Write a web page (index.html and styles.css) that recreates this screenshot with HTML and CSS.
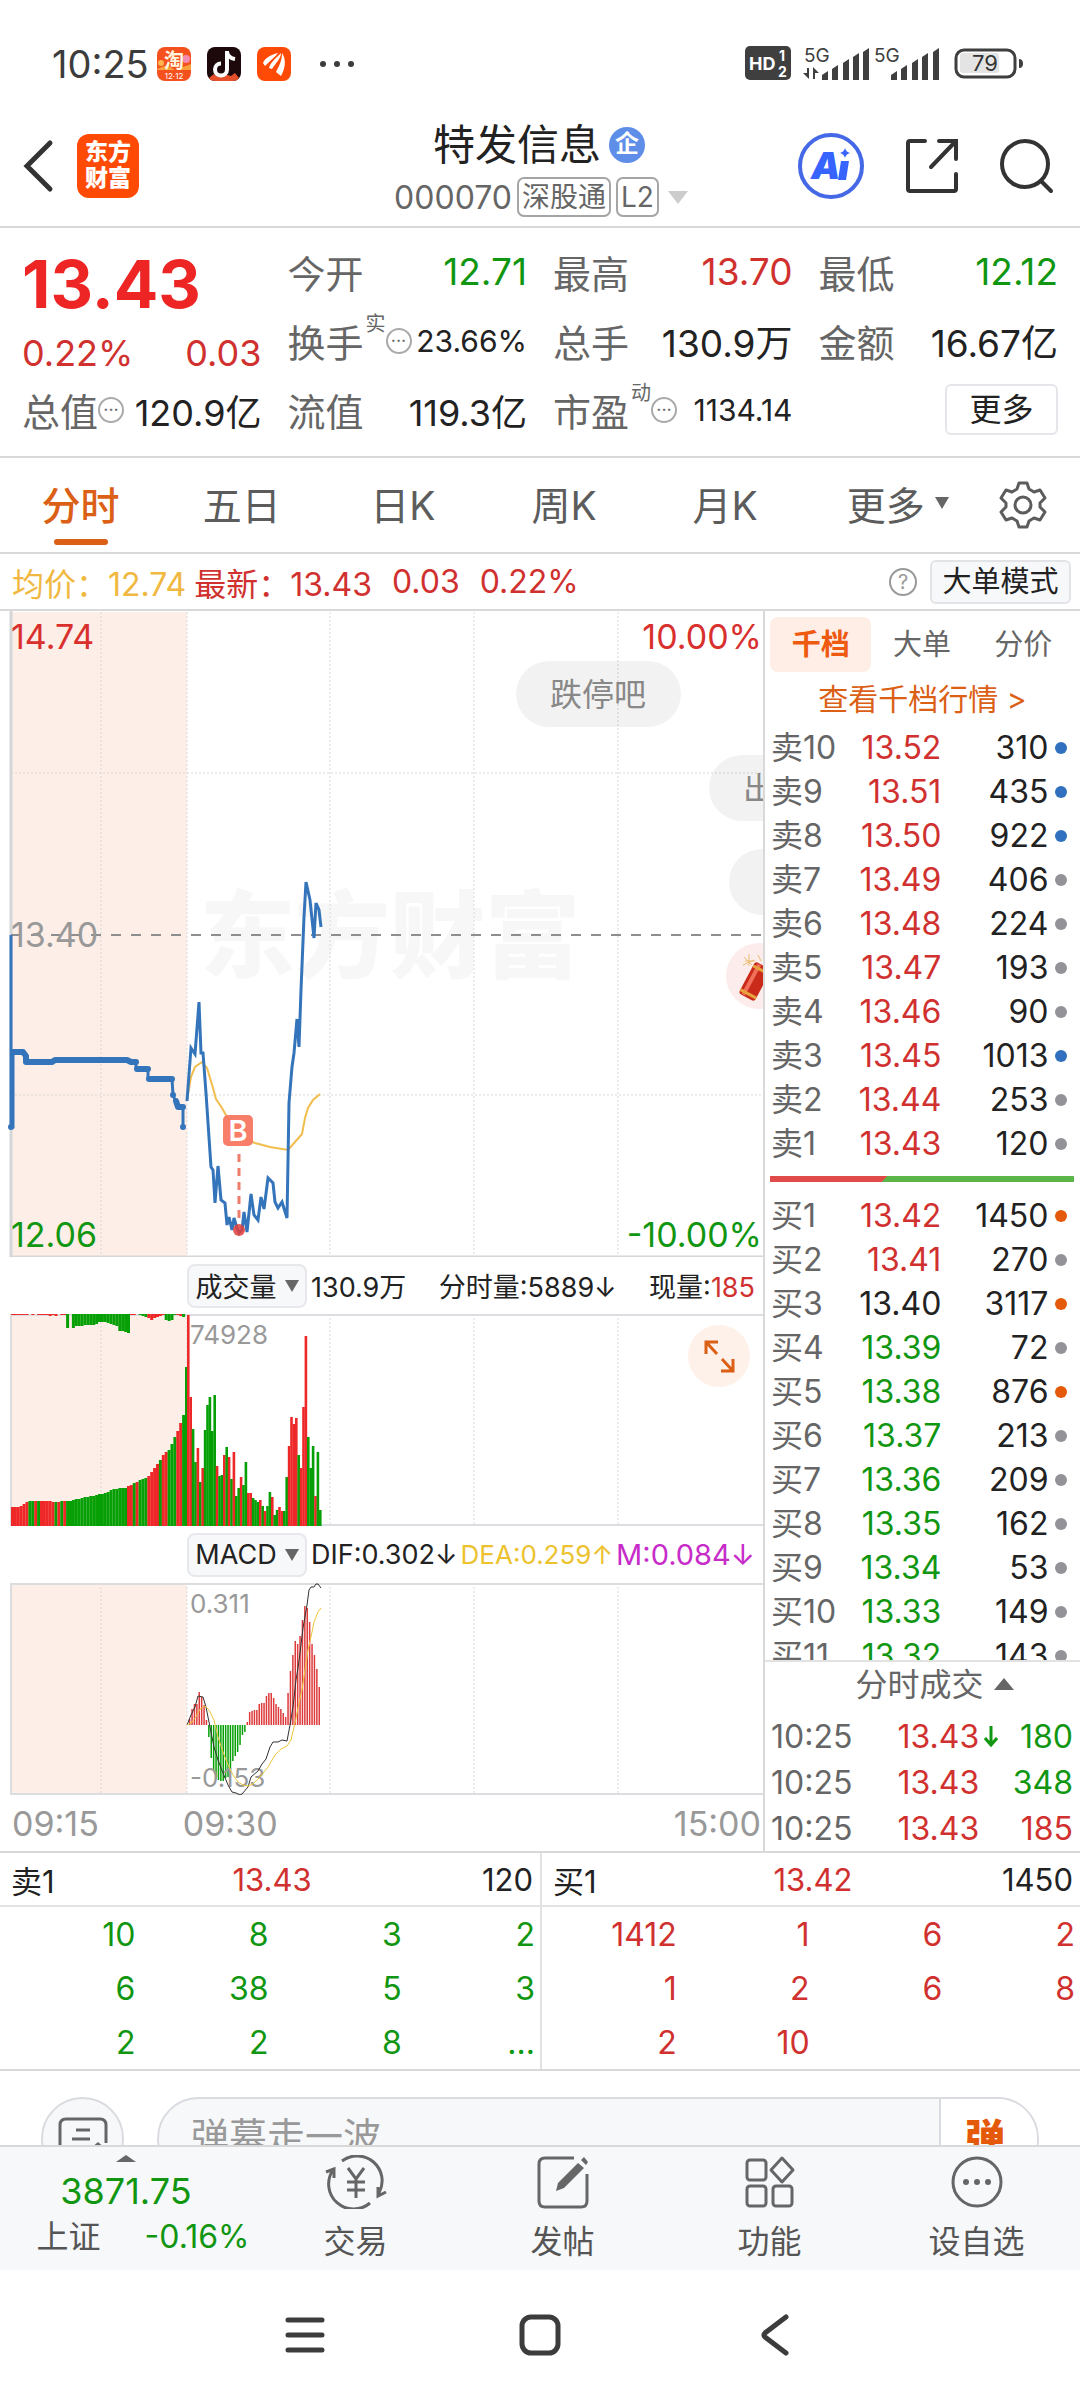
FILE: index.html
```html
<!DOCTYPE html>
<html lang="zh-CN">
<head>
<meta charset="utf-8">
<meta name="viewport" content="width=device-width, initial-scale=1">
<title>特发信息 000070</title>
<link rel="stylesheet" href="styles.css">
</head>
<body>
<div class="status">
  <span class="clock">10:25</span>
  <svg class="app" viewBox="0 0 34 34"><rect width="34" height="34" rx="8" fill="#f4511e"/><path d="M0 22l10-4 8 5 16-6v6H0z" fill="#f9a13c"/><circle cx="29" cy="12" r="4" fill="#f58ab0"/><circle cx="4" cy="16" r="3" fill="#ffb74d"/><text x="17" y="21" text-anchor="middle" font-size="20" font-weight="700" fill="#fff7df">淘</text><text x="17" y="32" text-anchor="middle" font-size="8" fill="#fff">12·12</text></svg>
  <svg class="app" viewBox="0 0 34 34"><rect width="34" height="34" rx="8" fill="#1d090c"/><path d="M2 31l5-4 4 3 6-3 7 2 4-3 4 5q-2 3-6 3H8q-4 0-6-3z" fill="#e5502a"/><path d="M20 4v18.500a6 6 0 1 1-6-6M20 5q1 6 8 7" fill="none" stroke="#fff" stroke-width="4"/></svg>
  <svg class="app" viewBox="0 0 34 34"><rect width="34" height="34" rx="8" fill="#ff4a05"/><path d="M6 16C8 11 13 8 21 6c-3 4-7 7-13 13zM12 21c1-5 6-9 12-15 0 5-5 10-9 16zM19 25c3-6 6-11 6-19 4 6 4 14-1 23z" fill="#fff"/></svg>
  <svg class="more-dots" viewBox="0 0 36 8"><g fill="#3c3c3c"><circle cx="4" cy="4" r="3"/><circle cx="18" cy="4" r="3"/><circle cx="32" cy="4" r="3"/></g></svg>
  <svg class="signals" viewBox="0 0 280 36"><g fill="#3f3f3f"><rect x="1" width="46" height="34" rx="5"/><text x="5" y="24" font-size="18" font-weight="700" fill="#fff">HD</text><text x="35" y="15" font-size="14" font-weight="700" fill="#fff">1</text><text x="34" y="31" font-size="14" font-weight="700" fill="#fff">2</text>
  <text x="60" y="16" font-size="19">5G</text><text x="130" y="16" font-size="19">5G</text>
  <path d="M65 22v11l-6-6h4v-5zM69 33V21l6 6h-4v6zM78 34v-5l6-4v9zM88 34V23l6-4v15zM99 34V17l6-4v21zM109 34V11l6-4v27zM119 34V6l6-4v32zM147 34v-5l6-4v9zM157 34V23l6-4v15zM168 34V17l6-4v21zM178 34V11l6-4v27zM189 34V6l6-4v32z"/></g>
  <rect x="216" y="7" width="39" height="20" rx="3" fill="#e4e4e4"/><rect x="212" y="4" width="59" height="27" rx="8" fill="none" stroke="#3f3f3f" stroke-width="3"/><path d="M275 13q4 0 4 4.500t-4 4.500z" fill="#3f3f3f"/><text x="241" y="25" text-anchor="middle" font-size="22" fill="#333">79</text></svg>
</div>

<header class="top">
  <button class="plain back" aria-label="返回"><svg width="32" height="54" viewBox="0 0 32 54"><path d="M27 4L4 27l23 23" fill="none" stroke="#333" stroke-width="5" stroke-linecap="round"/></svg></button>
  <div class="logo">东方<br>财富</div>
  <div class="name">
    <h1>特发信息<span class="corp">企</span></h1>
    <div class="code">000070<span class="tag">深股通</span><span class="tag">L2</span><i class="tri"></i></div>
  </div>
  <button class="plain ai" aria-label="AI"><svg width="68" height="68" viewBox="0 0 68 68"><circle cx="34" cy="34" r="31" fill="#fff" stroke="#4468e6" stroke-width="4"/><text x="14" y="47" font-size="37" font-weight="900" font-style="italic" fill="#3764ff">A</text><path d="M44 29h8l-3 19h-8z" fill="#3764ff"/><path d="M48 16q1 4 5 5-4 1-5 5-1-4-5-5 4-1 5-5z" fill="#3764ff"/></svg></button>
  <button class="plain share" aria-label="分享"><svg width="54" height="56" viewBox="0 0 54 56"><path d="M20 3H5q-2 0-2 2v46q0 2 2 2h44q2 0 2-2V36M34 3h17v18M51 3L26 29" fill="none" stroke="#333" stroke-width="4" stroke-linecap="round"/></svg></button>
  <button class="plain" aria-label="搜索"><svg width="54" height="56" viewBox="0 0 54 56"><circle cx="25" cy="26" r="23" fill="none" stroke="#333" stroke-width="4"/><path d="M41 43l10 10" stroke="#333" stroke-width="4" stroke-linecap="round"/></svg></button>
</header>

<section class="quote">
  <div class="price"><strong>13.43</strong><div class="pair"><span>0.22%</span><span>0.03</span></div></div>
  <div class="kv"><span>今开</span><b class="down">12.71</b></div>
  <div class="kv"><span>最高</span><b class="up">13.70</b></div>
  <div class="kv"><span>最低</span><b class="down">12.12</b></div>
  <div class="kv"><span>换手</span><sup>实</sup><i class="info">···</i><b class="small">23.66%</b></div>
  <div class="kv"><span>总手</span><b>130.9万</b></div>
  <div class="kv"><span>金额</span><b>16.67亿</b></div>
  <div class="kv"><span>总值</span><i class="info">···</i><b class="mid">120.9亿</b></div>
  <div class="kv"><span>流值</span><b class="mid">119.3亿</b></div>
  <div class="kv"><span>市盈</span><sup>动</sup><i class="info">···</i><b class="small">1134.14</b></div>
  <div class="kv"><button class="more">更多</button></div>
</section>

<nav class="tabs">
  <button class="on">分时</button><button>五日</button><button>日K</button><button>周K</button><button>月K</button><button class="wide">更多<i class="caret"></i></button>
  <button class="gear" aria-label="设置"><svg width="50" height="50" viewBox="0 0 50 50"><path d="M21 3h8l2 6 5 3 6-2 5 8-5 5v4l5 5-5 8-6-2-5 3-2 6h-8l-2-6-5-3-6 2-5-8 5-5v-4l-5-5 5-8 6 2 5-3z" fill="none" stroke="#5c5c5c" stroke-width="3" stroke-linejoin="round"/><circle cx="25" cy="25" r="8" fill="none" stroke="#5c5c5c" stroke-width="3"/></svg></button>
</nav>

<div class="legend">
  <span class="avg">均价：12.74</span><span class="up last">最新：13.43</span><span class="up">0.03</span><span class="up">0.22%</span>
  <i class="help">?</i><button class="mode">大单模式</button>
</div>

<main class="board">
  <section class="charts">
    <svg class="chart" viewBox="0 0 763 646">
      <rect x="11" y="1" width="176" height="644" fill="#fdeee7"/>
      <text x="390" y="360" text-anchor="middle" font-size="95" font-weight="900" fill="#f7f7f7">东方财富</text>
      <path class="grid" d="M101 1V645M187 1V645M330 1V645M474 1V645M618 1V645M11 162H763M11 484H763"/>
      <path d="M11 0V646M11 646H763" stroke="#d5d6d8" stroke-width="3" fill="none"/>
      <path d="M11 324H763" stroke="#8e8e8e" stroke-width="2" stroke-dasharray="10 10"/>
      <path d="M187 489L191 466 195 456 202 451 207 457 213 477 216 488 222 497 227 506 233 516 243 527 255 532 270 536 288 539 295 531 302 523 305 507 308 497 313 489 320 483" fill="none" stroke="#f2bd4d" stroke-width="2"/>
      <path d="M11 324V516H13V441" fill="none" stroke="#3474ba" stroke-width="3"/>
      <path d="M13 441H23L26 445V451H52L55 449H127L131 451H136M137 458H148M149 468H172M176 490L178 496H183" fill="none" stroke="#3474ba" stroke-width="6" stroke-linecap="round" stroke-linejoin="round"/>
      <path d="M136 451V458M148 458V468M172 468L173 484 178 496M183 496V516" fill="none" stroke="#3474ba" stroke-width="3"/>
      <g fill="#3474ba"><circle cx="11" cy="516" r="3"/><circle cx="183" cy="516" r="3"/><circle cx="173" cy="484" r="3"/></g>
      <path d="M187 490L191 437 195 443 199 391 201 442 203 442 206 482 211 556 213 559 215 592 218 555 221 589 225 592 227 614 229 606 232 619 234 607 237 617 239 622 242 619 244 601 247 621 251 583 254 604 258 609 261 586 264 598 268 567 273 572 275 591 278 597 282 591 287 607 289 492 292 456 294 442 297 408 299 436 301 379 304 306 306 271 310 289 314 327 316 292 319 299 321 316" fill="none" stroke="#3474ba" stroke-width="3"/>
      <path d="M239 543V612" stroke="#ed7c6c" stroke-width="3" stroke-dasharray="8 6"/><circle cx="239" cy="619" r="6" fill="#e43f3b" fill-opacity=".85"/>
      <rect x="223" y="504" width="30" height="31" rx="5" fill="#f97762" fill-opacity=".95"/><text x="238" y="530" text-anchor="middle" font-size="29" font-weight="600" fill="#fff">B</text>
      <g font-size="34"><text x="11" y="38" fill="#d9302e">14.74</text><text x="11" y="336" fill="#999">13.40</text><text x="11" y="636" fill="#119611">12.06</text><text x="762" y="38" text-anchor="end" fill="#d9302e">10.00%</text><text x="762" y="636" text-anchor="end" fill="#119611">-10.00%</text></g>
      <g fill="#000" fill-opacity=".05"><rect x="516" y="50" width="165" height="66" rx="33"/><rect x="709" y="144" width="165" height="66" rx="33"/><rect x="729" y="238" width="165" height="66" rx="33"/></g>
      <g font-size="32" fill="#888"><text x="598" y="95" text-anchor="middle">跌停吧</text><text x="743" y="189">出</text></g>
      <rect x="726" y="332" width="165" height="66" rx="33" fill="#fdecec"/>
      <g transform="rotate(28 754 370)"><rect x="746" y="352" width="18" height="36" rx="3" fill="#c92a1a"/><path d="M751 353v34" stroke="#f2705a" stroke-width="4"/><path d="M746 357h18M746 384h18" stroke="#e6a23c" stroke-width="3"/></g>
      <path d="M744 346l8 8M749 343v12M743 354l11-5M745 350h10M758 344l3 6" stroke="#e9bd70" stroke-width="1"/>
    </svg>
    <div class="bar"><button class="pick">成交量<i class="caret"></i></button><span>130.9万</span><span class="push">分时量:5889↓</span><span class="push">现量:<em class="up">185</em></span></div>
    <svg class="chart" id="volume" viewBox="0 0 763 212">
      <rect x="11" width="176" height="212" fill="#fdeee7"/>
      <path class="grid" d="M101 0V212M187 0V212M330 0V212M474 0V212M618 0V212"/>
      <path class="frame" d="M763 1H11V211H763"/>
      <g class="bars"></g>
      <text x="190" y="30" font-size="26" fill="#999">74928</text>
      <circle cx="719" cy="42" r="31" fill="#fef1ea"/><path d="M706 40V28h12M707 29l10 11M733 45v12h-12M732 56l-10-11" fill="none" stroke="#dc5f16" stroke-width="3"/>
    </svg>
    <div class="bar"><button class="pick">MACD<i class="caret"></i></button><span>DIF:0.302↓</span><span class="dea">DEA:0.259↑</span><span class="macd">M:0.084↓</span></div>
    <svg class="chart" id="macd" viewBox="0 0 763 212">
      <rect x="11" width="176" height="212" fill="#fdeee7"/>
      <path class="grid" d="M101 0V212M187 0V212M330 0V212M474 0V212M618 0V212"/>
      <path class="frame" d="M763 1H11V211H763"/>
      <g class="bars"></g>
      <g font-size="26" fill="#999"><text x="190" y="30">0.311</text><text x="190" y="204">-0.153</text></g>
      <path d="M187 142L191 132 195 124 198 113 203 114 206 124 210 144 214 164 218 177 223 190 228 202 232 209 236 210 240 212 242 211 248 204 251 194 258 188 262 181 266 176 270 164 273 159 278 159 282 157 287 158 290 142 293 124 296 97 298 85 300 70 303 45 307 22 309 7 311 4 314 4 316 1 318 1 321 5" fill="none" stroke="#333"/>
      <path d="M187 142L191 140 196 134 200 126 205 123 209 127 214 137 218 154 223 169 228 182 233 192 238 199 243 202 248 203 253 201 260 194 268 184 275 172 281 166 287 163 291 157 295 140 299 120 302 107 305 87 308 67 311 54 314 39 318 29 321 25" fill="none" stroke="#efc63a" stroke-width="1"/>
    </svg>
    <div class="axis"><span>09:15</span><span class="open">09:30</span><span class="close">15:00</span></div>
  </section>

  <aside class="side">
    <div class="seg"><button class="on">千档</button><button>大单</button><button>分价</button></div>
    <a class="depth" href="#depth">查看千档行情 &gt;</a>
    <div class="book">
      <table class="up-rows">
        <tr><th>卖10</th><td>13.52</td><td>310</td><td><i class="dot blue"></i></td></tr>
        <tr><th>卖9</th><td>13.51</td><td>435</td><td><i class="dot blue"></i></td></tr>
        <tr><th>卖8</th><td>13.50</td><td>922</td><td><i class="dot blue"></i></td></tr>
        <tr><th>卖7</th><td>13.49</td><td>406</td><td><i class="dot"></i></td></tr>
        <tr><th>卖6</th><td>13.48</td><td>224</td><td><i class="dot"></i></td></tr>
        <tr><th>卖5</th><td>13.47</td><td>193</td><td><i class="dot"></i></td></tr>
        <tr><th>卖4</th><td>13.46</td><td>90</td><td><i class="dot"></i></td></tr>
        <tr><th>卖3</th><td>13.45</td><td>1013</td><td><i class="dot blue"></i></td></tr>
        <tr><th>卖2</th><td>13.44</td><td>253</td><td><i class="dot"></i></td></tr>
        <tr><th>卖1</th><td>13.43</td><td>120</td><td><i class="dot"></i></td></tr>
      </table>
      <div class="ratio"></div>
      <table class="down-rows">
        <tr><th>买1</th><td class="up">13.42</td><td>1450</td><td><i class="dot orange"></i></td></tr>
        <tr><th>买2</th><td class="up">13.41</td><td>270</td><td><i class="dot"></i></td></tr>
        <tr><th>买3</th><td class="flat">13.40</td><td>3117</td><td><i class="dot orange"></i></td></tr>
        <tr><th>买4</th><td>13.39</td><td>72</td><td><i class="dot"></i></td></tr>
        <tr><th>买5</th><td>13.38</td><td>876</td><td><i class="dot orange"></i></td></tr>
        <tr><th>买6</th><td>13.37</td><td>213</td><td><i class="dot"></i></td></tr>
        <tr><th>买7</th><td>13.36</td><td>209</td><td><i class="dot"></i></td></tr>
        <tr><th>买8</th><td>13.35</td><td>162</td><td><i class="dot"></i></td></tr>
        <tr><th>买9</th><td>13.34</td><td>53</td><td><i class="dot"></i></td></tr>
        <tr><th>买10</th><td>13.33</td><td>149</td><td><i class="dot"></i></td></tr>
        <tr><th>买11</th><td>13.32</td><td>143</td><td><i class="dot"></i></td></tr>
      </table>
    </div>
    <button class="deals">分时成交<i class="caret-up"></i></button>
    <table class="ticks">
      <tr><th>10:25</th><td class="up">13.43</td><td class="arrow"><svg width="14" height="22" viewBox="0 0 14 22"><path d="M7 1v18M1 13l6 7 6-7" fill="none" stroke="#119611" stroke-width="3"/></svg></td><td class="down">180</td></tr>
      <tr><th>10:25</th><td class="up">13.43</td><td class="arrow"></td><td class="down">348</td></tr>
      <tr><th>10:25</th><td class="up">13.43</td><td class="arrow"></td><td class="up">185</td></tr>
    </table>
  </aside>
</main>

<section class="queues">
  <div class="queue">
    <div class="queue-head"><span>卖1</span><span class="up">13.43</span><span>120</span></div>
    <table class="down"><tr><td>10</td><td>8</td><td>3</td><td>2</td></tr><tr><td>6</td><td>38</td><td>5</td><td>3</td></tr><tr><td>2</td><td>2</td><td>8</td><td>...</td></tr></table>
  </div>
  <div class="queue">
    <div class="queue-head"><span>买1</span><span class="up">13.42</span><span>1450</span></div>
    <table class="up"><tr><td>1412</td><td>1</td><td>6</td><td>2</td></tr><tr><td>1</td><td>2</td><td>6</td><td>8</td></tr><tr><td>2</td><td>10</td><td></td><td></td></tr></table>
  </div>
</section>

<section class="chat">
  <button class="note" aria-label="弹幕设置"><svg width="50" height="50" viewBox="0 0 50 50"><path d="M48 26V8q0-6-6-6H8Q2 2 2 8v34h26" fill="none" stroke="#666" stroke-width="3"/><path d="M18 13h14M14 22h18" stroke="#666" stroke-width="3"/><path d="M32 32l8-7 8 7v8H32z" fill="#666"/></svg></button>
  <div class="field"><input type="text" aria-label="弹幕" placeholder="弹幕走一波"><button aria-label="弹幕开关">弹</button></div>
</section>

<nav class="dock">
  <a class="index" href="#index"><i class="caret-up"></i><b>3871.75</b><span><em>上证</em><small>-0.16%</small></span></a>
  <a href="#trade"><svg width="62" height="54" viewBox="0 0 62 54"><g fill="none" stroke="#666" stroke-width="3"><path d="M17 6A25 25 0 0 1 54 38M45 48A25 25 0 0 1 8 15M1 17l8-3v9M61 37l-8 4v-9M23 13l8 11 8-11M31 24v19M22 27h18M22 35h18"/></g></svg>交易</a>
  <a href="#post"><svg width="54" height="54" viewBox="0 0 54 54"><path d="M38 3H9Q3 3 3 9v37q0 6 6 6h36q6 0 6-6V19" fill="none" stroke="#666" stroke-width="3"/><path d="M20 36l2-8L42 8l6 5-20 20zM45 5l3-3 4 5-2 3z" fill="#666"/></svg>发帖</a>
  <a href="#tools"><svg width="52" height="54" viewBox="0 0 52 54"><g fill="none" stroke="#666" stroke-width="3"><rect x="3" y="5" width="19" height="20" rx="3"/><path d="M38 3l11 12-11 12-11-12z" stroke-linejoin="round"/><rect x="3" y="31" width="19" height="20" rx="3"/><rect x="29" y="31" width="19" height="20" rx="3"/></g></svg>功能</a>
  <a href="#watch"><svg width="54" height="54" viewBox="0 0 54 54"><circle cx="27" cy="27" r="24" fill="none" stroke="#666" stroke-width="3"/><g fill="#666"><circle cx="16" cy="27" r="3"/><circle cx="27" cy="27" r="3"/><circle cx="38" cy="27" r="3"/></g></svg>设自选</a>
</nav>

<div class="system">
  <button class="plain" aria-label="菜单"><svg width="44" height="44" viewBox="0 0 44 44"><path d="M5 7h34M5 22h34M5 37h34" stroke="#3c3c3c" stroke-width="5" stroke-linecap="round"/></svg></button>
  <button class="plain" aria-label="主页"><svg width="44" height="44" viewBox="0 0 44 44"><rect x="4" y="4" width="36" height="36" rx="9" fill="none" stroke="#3c3c3c" stroke-width="5"/></svg></button>
  <button class="plain" aria-label="后退"><svg width="44" height="44" viewBox="0 0 44 44"><path d="M33 4L12 20q-2 2 0 4l21 16" fill="none" stroke="#3c3c3c" stroke-width="5" stroke-linecap="round"/></svg></button>
</div>
<script src="chart.js"></script>
</body>
</html>
```

FILE: styles.css
```css
* { box-sizing: border-box; }
body { margin: 0; background: #fff; color: #222; font-family: Inter, "Noto Sans CJK SC", sans-serif; font-size: 32px; }
button, input { font: inherit; color: inherit; border: 0; padding: 0; margin: 0; background: none; }
i, em { font-style: normal; }
a { color: inherit; text-decoration: none; }
svg { display: block; flex: none; }
table { width: 100%; border-collapse: collapse; table-layout: fixed; }
th, td { padding: 0; font-weight: 400; text-align: right; }
th { text-align: left; }
.up { color: #d0312f; }
.down { color: #119611; }
.plain { display: flex; }

.status { display: flex; align-items: center; height: 124px; padding: 4px 56px 0 52px; }
.clock { font-size: 38px; color: #3c3c3c; margin-right: 8px; }
.app { width: 34px; height: 34px; margin-right: 16px; }
.more-dots { width: 36px; height: 8px; margin-left: 12px; }
.signals { width: 280px; height: 36px; margin-left: auto; }

.top { display: flex; align-items: center; height: 104px; padding: 0 26px 18px 23px; border-bottom: 2px solid #d9d9d9; }
.logo { width: 62px; height: 64px; margin-left: 22px; border-radius: 12px; background: #ff4a05; color: #fff; font-size: 23px; font-weight: 900; line-height: 26px; text-align: center; padding-top: 5px; }
.name { flex: 1; margin-left: 158px; display: flex; flex-direction: column; align-items: center; padding-top: 12px; white-space: nowrap; }
h1 { display: flex; align-items: center; margin: 0 0 0 -16px; font-size: 42px; font-weight: 400; line-height: 50px; }
.corp { width: 36px; height: 36px; margin-left: 8px; border-radius: 50%; background: #5f8ee8; color: #fff; font-size: 24px; font-weight: 700; line-height: 34px; text-align: center; }
.code { display: flex; align-items: center; margin-left: -12px; height: 54px; color: #666; font-size: 32px; }
.tag { height: 40px; margin-left: 5px; padding: 0 3px; border: 2px solid #a5a5a5; border-radius: 7px; font-size: 28px; line-height: 36px; }
.tri { margin-left: 9px; border: 10px solid transparent; border-top: 13px solid #ccc; border-bottom: 0; }
.ai { margin-right: 40px; }
.share { margin-right: 41px; }

.quote { display: grid; grid-template-columns: repeat(4, minmax(0, 1fr)); grid-auto-rows: 69px; column-gap: 26px; padding: 9px 22px 12px; border-bottom: 2px solid #d9d9d9; }
.price { grid-row: span 2; color: #d0312f; font-size: 36px; }
.price strong { display: block; color: #ee2525; font-size: 66px; font-weight: 700; line-height: 94px; }
.pair { display: flex; justify-content: space-between; line-height: 44px; }
.kv { display: flex; align-items: center; color: #666; font-size: 38px; white-space: nowrap; }
.kv b { margin-left: auto; font-weight: 400; font-size: 37px; }
.kv b:not(.up):not(.down) { color: #222; }
.kv .small { font-size: 30px; }
.kv .mid { font-size: 36px; }
.kv sup { align-self: flex-start; margin-left: 2px; font-size: 20px; line-height: 36px; }
.info { width: 26px; height: 26px; border: 2px solid #aaa; border-radius: 50%; font-size: 18px; line-height: 21px; text-align: center; }
.more { width: 113px; height: 51px; margin-left: auto; border: 2px solid #e4e6ea; border-radius: 6px; color: #222; font-size: 32px; line-height: 44px; }

.tabs { display: flex; height: 96px; padding-right: 24px; border-bottom: 2px solid #d9d9d9; color: #5c5c5c; font-size: 39px; }
.tabs button { position: relative; flex: 161; padding-bottom: 5px; }
.tabs .wide { flex: 184; display: flex; align-items: center; justify-content: center; }
.tabs .gear { flex: 66; display: flex; align-items: center; justify-content: center; padding-bottom: 0; }
.tabs .on { color: #dc5f16; font-weight: 500; }
.tabs .on::after { content: ""; position: absolute; left: 50%; bottom: 7px; width: 54px; height: 6px; margin-left: -27px; border-radius: 3px; background: #dc5f16; }
.caret { display: inline-block; border: 7px solid transparent; border-top: 12px solid #666; border-bottom: 0; margin-left: 10px; }
.caret-up { display: inline-block; border: 10px solid transparent; border-bottom: 12px solid #666; border-top: 0; }

.legend { display: flex; align-items: center; height: 57px; padding: 0 9px 0 12px; border-bottom: 2px solid #d9d9d9; font-size: 32px; white-space: nowrap; }
.legend .up { margin-right: 20px; }
.legend .avg { color: #f0b840; margin-right: 8px; }
.help { width: 28px; height: 28px; margin: 0 13px 0 auto; border: 2px solid #999; border-radius: 50%; color: #999; font-size: 20px; line-height: 24px; text-align: center; }
.mode { width: 141px; height: 44px; border: 2px solid #e2e4e8; border-radius: 6px; background: #f7f8fa; font-size: 29px; line-height: 38px; }

.board { display: grid; grid-template-columns: 763fr 317fr; border-bottom: 2px solid #d9d9d9; }
.charts { min-width: 0; }
.chart { width: 100%; height: auto; }
.grid { fill: none; stroke: #d9d9d9; stroke-width: 1; stroke-dasharray: 2 2; }
.frame { fill: none; stroke: #dcdde0; stroke-width: 2; }
.bar { display: flex; align-items: center; height: 57px; padding: 0 8px 0 187px; font-size: 27px; white-space: nowrap; }
.pick { flex: none; display: flex; align-items: center; justify-content: center; width: 120px; height: 44px; margin-right: 4px; border: 2px solid #e6e8ec; border-radius: 8px; background: #f7f8fa; font-size: 27px; }
.pick .caret { margin-left: 8px; }
.push { margin-left: auto; }
.dea { margin-left: auto; color: #ecc22e; font-size: 26px; }
.macd { margin-left: auto; color: #c72cc9; font-size: 29px; }
.axis { display: flex; height: 56px; align-items: center; padding: 0 2px 0 12px; color: #999; font-size: 34px; }
.open { margin-left: 84px; }
.close { margin-left: auto; }

.side { display: flex; flex-direction: column; min-width: 0; border-left: 2px solid #d9d9d9; padding-top: 6px; color: #666; }
.seg { display: flex; padding: 0 6px 0 5px; }
.seg button { flex: 1; height: 55px; border-radius: 8px; font-size: 29px; line-height: 50px; }
.seg .on { background: #feeee6; color: #ee5a10; font-weight: 700; }
.depth { height: 54px; color: #dc5f16; font-size: 30px; line-height: 54px; text-align: center; }
.book { flex: 1 1 0px; min-height: 0; overflow: hidden; }
.book tr { height: 44px; }
.book th, .book td { line-height: 44px; }
.book th { width: 28%; padding-left: 6px; }
.book td:nth-child(2) { width: 28%; }
.book td:nth-child(3) { width: 34%; color: #222; }
.up-rows td:nth-child(2) { color: #d0312f; }
.down-rows td:nth-child(2) { color: #119611; }
.down-rows td.up { color: #d0312f; }
.down-rows td.flat { color: #222; }
.dot { display: block; width: 12px; height: 12px; margin-left: 7px; border-radius: 50%; background: #929298; }
.dot.blue { background: #3070be; }
.dot.orange { background: #e55a0a; }
.ratio { height: 6px; margin: 10px 6px 12px 5px; background: linear-gradient(135deg, #e04b49 38%, #5cb548 38%); }
.deals { display: flex; align-items: center; justify-content: center; height: 53px; padding: 0 0 6px 24px; border-top: 2px solid #e2e2e2; line-height: 44px; }
.deals .caret-up { margin: 0 0 2px 10px; }
.ticks tr { height: 46px; }
.ticks th { padding-left: 6px; width: 36%; }
.ticks td { padding-right: 7px; }
.ticks .up:nth-child(2) { padding-right: 0; width: 32%; }
.ticks .arrow { width: 8%; padding: 0 0 0 5px; }

.queues { display: grid; grid-template-columns: 1fr 1fr; border-bottom: 2px solid #d9d9d9; }
.queue + .queue { border-left: 2px solid #e2e2e2; }
.queue-head { display: flex; justify-content: space-between; align-items: center; height: 54px; padding: 0 7px 0 11px; border-bottom: 2px solid #e2e2e2; font-size: 31px; }
.queue-head span { flex: 1; }
.queue-head span:nth-child(2) { text-align: center; }
.queue-head span:nth-child(3) { text-align: right; }
.queue tr { height: 54px; }
.queue td { padding-right: 5px; }
.queue td:first-child { width: 26%; }

.chat { display: flex; gap: 33px; height: 74px; padding: 26px 41px 0; overflow: hidden; }
.note { flex: none; display: flex; justify-content: center; width: 83px; height: 83px; padding-top: 18px; border: 2px solid #d9dbe0; border-radius: 50%; background: #f7f8fa; }
.field { flex: 1; display: flex; height: 83px; border: 2px solid #d9dbe0; border-radius: 42px; background: #f7f8fa; overflow: hidden; }
.field input { flex: 1; min-width: 0; padding: 0 0 5px 32px; font-size: 38px; }
.field input::placeholder { color: #999; opacity: 1; }
.field button { width: 98px; padding: 0 8px 6px 0; border-left: 2px solid #d9dbe0; background: #fff; color: #e55a0a; font-size: 40px; font-weight: 900; }

.dock { display: flex; height: 125px; border-top: 2px solid #d9d9d9; background: #f7f8fa; color: #555; }
.dock a { flex: 207; display: flex; flex-direction: column; align-items: center; padding-top: 8px; line-height: 46px; }
.dock svg { margin-bottom: 10px; }
.dock .index { flex: 252; color: #119611; }
.index b { font-size: 36px; font-weight: 400; line-height: 46px; padding-top: 6px; }
.index .caret-up { border-bottom-width: 7px; }
.index span { display: flex; gap: 44px; padding-left: 34px; white-space: nowrap; }
.index em { color: #555; }
.index small { font-size: 32px; }

.system { display: flex; justify-content: center; align-items: center; gap: 191px; height: 130px; }
```

FILE: chart.js
```js
const RED = '#ee2828';
const GREEN = '#06a006';

function rect(group, x, y, width, height, fill) {
  const node = document.createElementNS('http://www.w3.org/2000/svg', 'rect');
  const attrs = { x, y, width, height, fill };
  for (const key in attrs) node.setAttribute(key, attrs[key]);
  group.append(node);
}

// Call auction, one value every 15 seconds.
const auction = [19,19,19,20,22,24,25,25,25,25,25,25,25,25,24,24,24,25,25,25,25,26,27,27,28,29,29,30,30,31,32,32,33,34,36,37,37,38,38,38,40,41,43,44,46,47,48,50,54,58,62,66,71,74,76,82,89,95,103,111,159];
const auctionSide = 'rrrrrrggrgrrrrrgrgrggggggggggggggggggggg' + 'rrgrgggrrrrgrrgggrrgg';
const unmatched = [1,1,1,1,1,1,0,1,0,1,1,1,1,2,1,2,0,1,1,14,0,14,12,12,12,11,11,11,11,10,8,8,8,9,10,11,12,17,17,18,19,1,1,0,1,2,3,4,6,4,3,2,1,6,7,6,1,1,2,3,0];
const unmatchedSide = 'rrrrrrrrrrrrrrrrrrrgggggggggggggggggggggg' + 'rrrgggrrrrrrggggrrgg';

// Continuous session, one value a minute.
const minutes = [211,129,97,64,78,44,58,96,121,129,95,131,60,50,51,71,79,69,47,74,30,38,49,41,64,33,33,28,26,24,26,20,15,20,34,29,11,16,19,15,15,49,80,109,102,108,71,58,119,190,89,58,80,30,74,16];
const minuteSide = 'rrggrgrgggggrggrgrgrggrggrrgggrgrggrggrrggrrrrgrrrgggrgg';

const volume = document.querySelector('#volume .bars');
auction.forEach((v, i) => {
  const x = 11 + i * 2.9;
  rect(volume, x, 212 - v, 3, v, auctionSide[i] === 'r' ? RED : GREEN);
  rect(volume, x, 0, 3, unmatched[i], unmatchedSide[i] === 'r' ? RED : GREEN);
});
minutes.forEach((v, i) => rect(volume, 187 + i * 2.4, 212 - v, 2.6, v, minuteSide[i] === 'r' ? RED : GREEN));

const histogram = [0,6,16,21,21,33,28,20,5,-12,-33,-45,-53,-55,-56,-56,-53,-52,-44,-36,-31,-27,-20,-10,-7,3,13,14,15,15,21,22,22,29,32,32,27,21,18,16,12,8,32,54,70,84,81,89,105,119,117,103,81,70,56,38];
const macd = document.querySelector('#macd .bars');
histogram.forEach((v, i) => rect(macd, 186.5 + i * 2.4, v > 0 ? 142 - v : 142, 1.5, Math.abs(v), v > 0 ? '#dd3b3b' : GREEN));
```
